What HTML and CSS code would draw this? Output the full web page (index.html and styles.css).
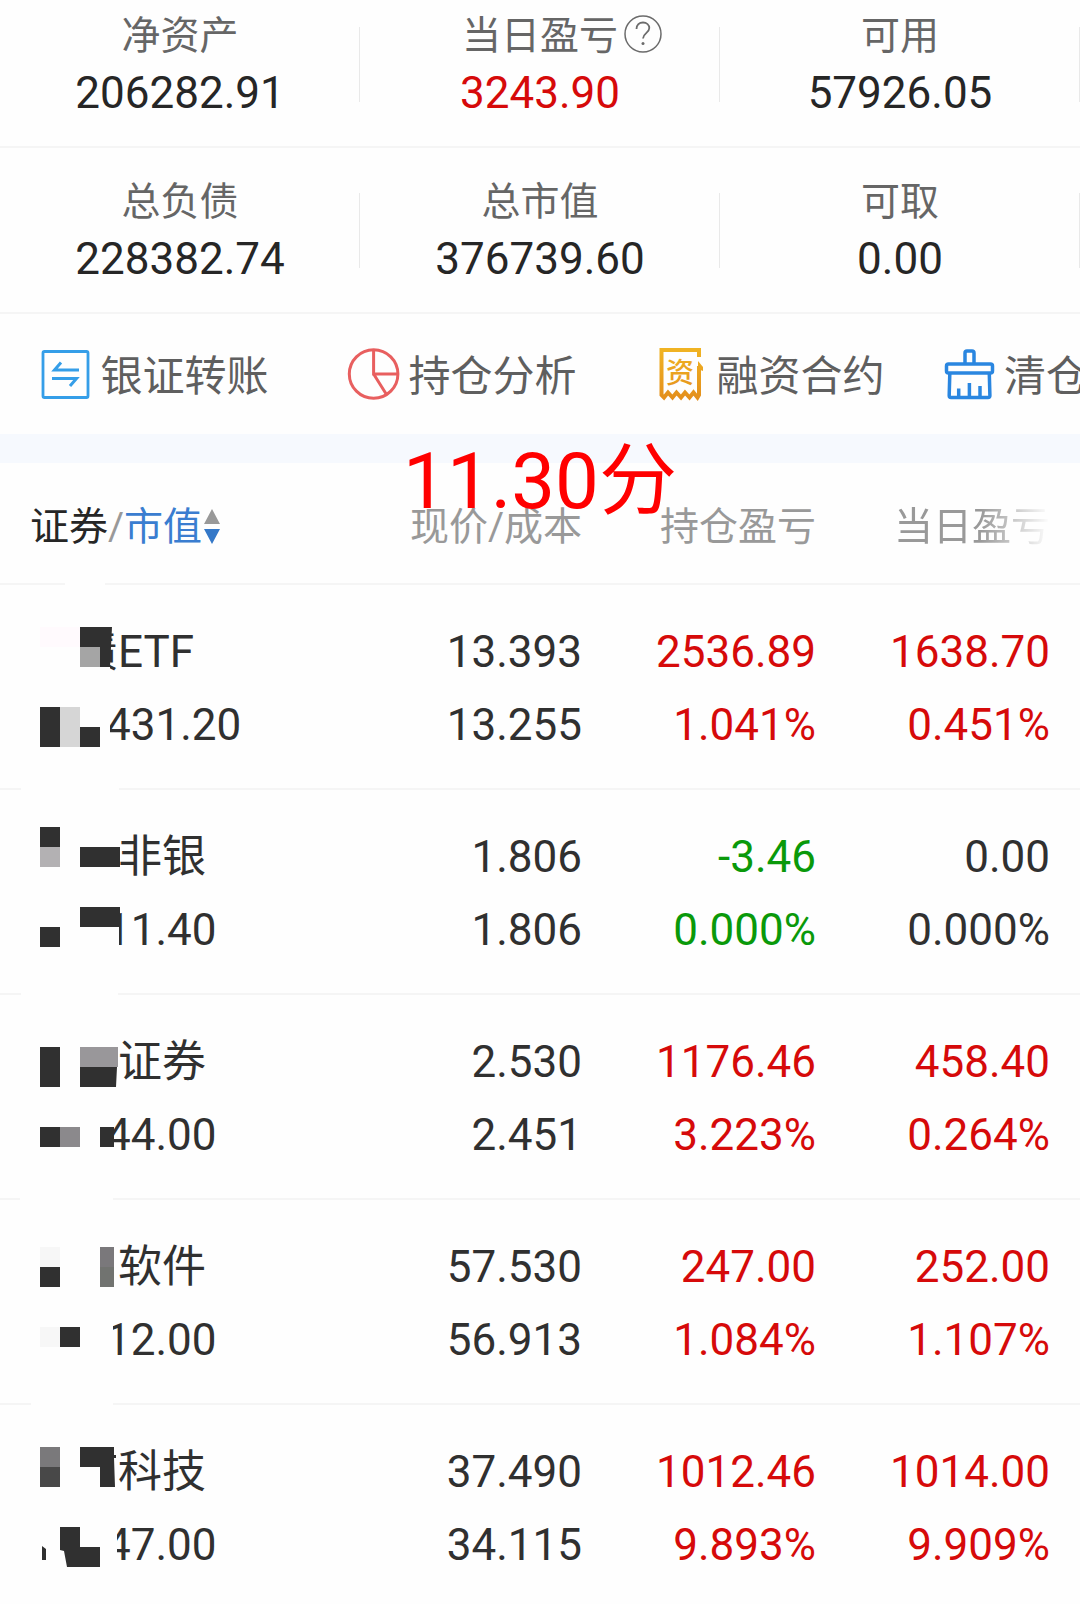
FILE: index.html
```html
<!DOCTYPE html>
<html lang="zh-CN">

<head>
    <meta charset="UTF-8">
    <meta name="viewport" content="width=device-width, initial-scale=1">
    <title>信用持仓</title>
    <link rel="stylesheet" href="styles.css">
</head>

<body>
    <dl class="summary">
        <div class="summary-item">
            <dt>净资产</dt>
            <dd>206282.91</dd>
        </div>
        <div class="summary-item">
            <dt>
                <span class="with-help">当日盈亏
                    <button class="help" aria-label="说明">
                        <svg width="38" height="38" viewBox="0 0 38 38" fill="none" stroke="#6b6b6b">
                            <circle cx="19" cy="19" r="18" stroke-width="1.5" />
                            <path d="M12.5 14c0-4.200 2.800-6.500 6.500-6.500s6.300 2.300 6.300 5.600c0 5-6.300 5.200-6.300 10.400" stroke-width="1.800" />
                            <circle cx="19" cy="28.500" r="1.500" fill="#6b6b6b" stroke="none" />
                        </svg>
                    </button>
                </span>
            </dt>
            <dd class="up">3243.90</dd>
        </div>
        <div class="summary-item">
            <dt>可用</dt>
            <dd>57926.05</dd>
        </div>
        <div class="summary-item">
            <dt>总负债</dt>
            <dd>228382.74</dd>
        </div>
        <div class="summary-item">
            <dt>总市值</dt>
            <dd>376739.60</dd>
        </div>
        <div class="summary-item">
            <dt>可取</dt>
            <dd>0.00</dd>
        </div>
    </dl>

    <nav class="tools">
        <button class="tool">
            <svg class="tool-icon" viewBox="0 0 50 50" fill="none" stroke="#359ee8">
                <rect x="2" y="1.500" width="45" height="46" rx="1.500" stroke-width="2.800" />
                <path d="M38 20H13.500L20 12.500M11 28.500H35.500L29 36" stroke-width="3" />
            </svg>
            银证转账
        </button>
        <button class="tool">
            <svg class="tool-icon" viewBox="0 0 50 50" fill="none" stroke="#e85f5f" stroke-width="3">
                <circle cx="24.600" cy="24" r="24.300" />
                <path d="M24.600 0V24H49M24.600 24L37.500 44.500" />
            </svg>
            持仓分析
        </button>
        <button class="tool">
            <svg class="tool-icon" viewBox="0 0 50 50">
                <defs>
                    <linearGradient id="gold" gradientUnits="userSpaceOnUse" x1="0" y1="0" x2="0" y2="50">
                        <stop offset="0" stop-color="#f0b323" />
                        <stop offset="1" stop-color="#e38e1c" />
                    </linearGradient>
                </defs>
                <path d="M42 7V0H4.500V45L7 47.500L11 42.500L15.500 47.500L19.500 42.500L24 47.500L28 42.500L32.500 47.500L36.500 42.500L40.500 47.500L42 45V16" fill="none" stroke="url(#gold)" stroke-width="4" />
                <path d="M41 11L46 17V21L41 19Z" fill="url(#gold)" />
                <text class="icon-text" x="23" y="33" text-anchor="middle" fill="url(#gold)">资</text>
            </svg>
            融资合约
        </button>
        <button class="tool">
            <svg class="tool-icon" viewBox="0 0 50 50" fill="none" stroke="#2a86e0" stroke-width="3.500">
                <path d="M20 13V3Q20 1 22 1H27Q29 1 29 3V13" />
                <rect x="1.500" y="14" width="46" height="9" rx="2" />
                <path d="M4.800 23.500L4.200 45.500Q4.200 47.500 6 47.500H43Q45 47.500 44.900 45.500L44.300 23.500" />
                <path d="M13.700 47V38.500M24.400 47V33M35 47V36" />
            </svg>
            清仓
        </button>
    </nav>

    <div class="band">
        <p class="note">11.30分</p>
    </div>

    <table class="holdings">
        <colgroup>
            <col>
            <col class="col-num">
            <col class="col-num">
            <col class="col-last">
        </colgroup>
        <thead>
            <tr>
                <th class="name">
                    <button class="sort">
                        <span class="dark">证券</span>/<span class="active">市值</span>
                        <svg width="16" height="36" viewBox="0 0 16 36">
                            <path d="M8 0L16 15H0Z" fill="#999" />
                            <path d="M8 35L16 20H0Z" fill="#3478c8" />
                        </svg>
                    </button>
                </th>
                <th>现价/成本</th>
                <th>持仓盈亏</th>
                <th><span class="fade">当日盈亏</span></th>
            </tr>
        </thead>
        <tbody>
            <tr>
                <td class="name">
                    <div class="stock">债ETF</div>
                    <div class="worth">431.20</div>
                    <svg class="mosaic" width="120" height="205" viewBox="0 0 120 205" fill="#303030">
                        <path d="M65-3H105V0H65ZM21 202H119V205H21ZM70 35H80V90H70ZM80 82H110V92H80ZM100 118H110V165H100Z" fill="#fefefe" />
                        <path d="M40 42H80V62H40Z" fill="#fffafd" />
                        <path d="M80 42H112L110 82H80Z" />
                        <path d="M80 62H100V82H80Z" fill="#a5a5a5" />
                        <path d="M40 122H60V162H40ZM80 142H100V162H80Z" />
                        <path d="M60 122H80V162H60Z" fill="#d6d6d6" />
                    </svg>
                </td>
                <td>
                    <div>13.393</div>
                    <div>13.255</div>
                </td>
                <td class="up">
                    <div>2536.89</div>
                    <div>1.041%</div>
                </td>
                <td class="up">
                    <div>1638.70</div>
                    <div>0.451%</div>
                </td>
            </tr>
            <tr>
                <td class="name">
                    <div class="stock indent">非银</div>
                    <div class="worth">11.40</div>
                    <svg class="mosaic" width="120" height="205" viewBox="0 0 120 205" fill="#303030">
                        <path d="M21 202H118V205H21ZM100 115H119V165H100Z" fill="#fefefe" />
                        <path d="M40 37H60V57H40ZM80 57H120V77H80ZM80 117H120V137H80ZM40 137H60V157H40Z" />
                        <path d="M40 57H60V77H40Z" fill="#b3b1b3" />
                    </svg>
                </td>
                <td>
                    <div>1.806</div>
                    <div>1.806</div>
                </td>
                <td class="down">
                    <div>-3.46</div>
                    <div>0.000%</div>
                </td>
                <td>
                    <div>0.00</div>
                    <div>0.000%</div>
                </td>
            </tr>
            <tr>
                <td class="name">
                    <div class="stock indent">证券</div>
                    <div class="worth">44.00</div>
                    <svg class="mosaic" width="120" height="205" viewBox="0 0 120 205" fill="#303030">
                        <path d="M20 202H113V205H20ZM100 115H113V165H100Z" fill="#fefefe" />
                        <path d="M40 52H60V92H40ZM80 72H117L116 92H80ZM40 132H60V152H40ZM100 132H114V152H100Z" />
                        <path d="M80 52H118V72H80Z" fill="#99979a" />
                        <path d="M60 132H80V152H60Z" fill="#8b898c" />
                    </svg>
                </td>
                <td>
                    <div>2.530</div>
                    <div>2.451</div>
                </td>
                <td class="up">
                    <div>1176.46</div>
                    <div>3.223%</div>
                </td>
                <td class="up">
                    <div>458.40</div>
                    <div>0.264%</div>
                </td>
            </tr>
            <tr>
                <td class="name">
                    <div class="stock indent">软件</div>
                    <div class="worth">12.00</div>
                    <svg class="mosaic" width="120" height="205" viewBox="0 0 120 205" fill="#303030">
                        <path d="M31 202H113V205H31ZM100 115H113V165H100Z" fill="#fefefe" />
                        <path d="M40 67H60V87H40ZM60 127H80V147H60Z" />
                        <path d="M40 47H60V67H40ZM40 127H60V147H40Z" fill="#f7f7f7" />
                        <path d="M100 47H114V67H100Z" fill="#7a787b" />
                        <path d="M100 67H114V87H100Z" fill="#717370" />
                    </svg>
                </td>
                <td>
                    <div>57.530</div>
                    <div>56.913</div>
                </td>
                <td class="up">
                    <div>247.00</div>
                    <div>1.084%</div>
                </td>
                <td class="up">
                    <div>252.00</div>
                    <div>1.107%</div>
                </td>
            </tr>
            <tr>
                <td class="name">
                    <div class="stock indent">科技</div>
                    <div class="worth">47.00</div>
                    <svg class="mosaic" width="120" height="199" viewBox="0 0 120 199" fill="#303030">
                        <path d="M100 115H117V165H100Z" fill="#fefefe" />
                        <path d="M80 42H114V50H116V53H114L115 82H100V62H80ZM60 122H80V142H100V162H67L64 146L60 145ZM42 141L46 144V155H42Z" />
                        <path d="M40 42H60V62H40Z" fill="#7a797b" />
                        <path d="M40 62H60V82H40Z" fill="#484848" />
                    </svg>
                </td>
                <td>
                    <div>37.490</div>
                    <div>34.115</div>
                </td>
                <td class="up">
                    <div>1012.46</div>
                    <div>9.893%</div>
                </td>
                <td class="up">
                    <div>1014.00</div>
                    <div>9.909%</div>
                </td>
            </tr>
        </tbody>
    </table>
</body>

</html>
```
FILE: styles.css
```css
body {
    margin: 0;
    background-color: #fefefe;
    color: #303030;
    font-family: Roboto, "Noto Sans CJK SC", sans-serif;
    overflow-x: hidden;
}

button {
    padding: 0;
    border: none;
    background: none;
    color: inherit;
    font: inherit;
    cursor: pointer;
}

svg {
    display: block;
    overflow: visible;
}

.up {
    color: #d60a0a;
}

.down {
    color: #0a990a;
}

/* account summary, top row partly scrolled away */
.summary {
    display: grid;
    grid-template-columns: repeat(3, 1fr);
    margin: -18px 0 0;
    text-align: center;
}

.summary-item {
    padding: 34px 0 16px;
    border-bottom: 2px solid #f5f5f5;
    background: linear-gradient(#e9e9e9, #e9e9e9) no-repeat right 45px / 1px 75px;
}

.summary dt {
    color: #666;
    font-size: 39px;
    line-height: 40px;
}

.summary dd {
    margin: 0;
    font-size: 44px;
    line-height: 74px;
}

.summary dd:not(.up) {
    color: #262626;
}

.with-help {
    position: relative;
}

.help {
    position: absolute;
    left: 100%;
    top: 2px;
    margin-left: 6px;
}

/* shortcuts */
.tools {
    display: flex;
    height: 120px;
    padding-left: 1px;
    overflow: hidden;
}

.tool {
    display: flex;
    flex: 0 0 308px;
    justify-content: center;
    align-items: center;
    gap: 9px;
    padding-top: 6px;
    color: #5f5f5f;
    font-size: 42px;
    line-height: 60px;
    white-space: nowrap;
}

.tool:last-child {
    justify-content: flex-start;
    padding-left: 20px;
}

.tool-icon {
    width: 50px;
    height: 50px;
    margin-bottom: 4px;
}

.icon-text {
    font-size: 28px;
    font-weight: 500;
}

.band {
    position: relative;
    height: 29px;
    background-color: #f6f9fe;
}

.note {
    position: absolute;
    left: 50%;
    top: 3px;
    margin: 0;
    transform: translateX(-50%);
    color: #f00;
    font-size: 78px;
    line-height: 90px;
    white-space: nowrap;
}

/* holdings */
.holdings {
    width: 100%;
    table-layout: fixed;
    border-spacing: 0;
    text-align: right;
}

.col-num {
    width: 234px;
}

.col-last {
    width: 264px;
}

.holdings th {
    padding: 34px 0 26px;
    border-bottom: 2px solid #f5f5f5;
    color: #999;
    font-size: 39px;
    font-weight: normal;
    line-height: 60px;
    text-align: right;
    white-space: nowrap;
}

.holdings td {
    padding: 31px 0 26px;
    border-bottom: 2px solid #f5f5f5;
    font-size: 44px;
    line-height: 73px;
}

.holdings th:last-child,
.holdings td:last-child {
    padding-right: 30px;
}

.holdings tbody tr:last-child td {
    padding-bottom: 22px;
    border-bottom: none;
}

.holdings .name {
    position: relative;
    padding-left: 30px;
    text-align: left;
}

.sort {
    display: flex;
    align-items: center;
}

.sort svg {
    margin-left: 2px;
}

.dark {
    color: #262626;
}

.active {
    color: #3a7dd0;
}

.fade {
    -webkit-mask-image: linear-gradient(to right, #000 55%, transparent 100%);
    mask-image: linear-gradient(to right, #000 55%, transparent 100%);
}

.stock {
    padding-left: 44px;
}

.stock.indent {
    padding-left: 88px;
}

.worth {
    padding-left: 76px;
}

.mosaic {
    position: absolute;
    left: 0;
    top: 0;
}
```
